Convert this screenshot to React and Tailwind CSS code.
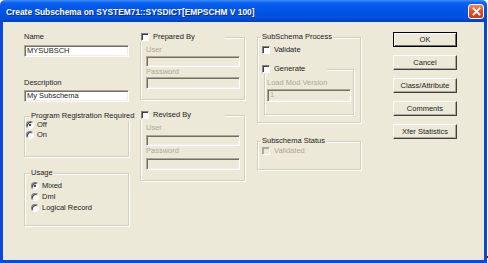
import React from "react"

const sunken = "border border-t-[#aca899] border-l-[#aca899] border-b-white border-r-white shadow-[inset_1px_1px_0_#716f64,inset_-1px_-1px_0_#f1efe2]"
const groupBox = "relative border border-[#d0d0bf] shadow-[inset_1px_1px_0_#fff,1px_1px_0_#fff]"

function Radio({ checked }) {
  return (
    <span className="relative w-[8px] h-[8px] shrink-0 rounded-full bg-white border border-t-[#808080] border-l-[#808080] border-b-white border-r-white shadow-[inset_1px_1px_0_#404040]">
      {checked && <span className="absolute left-[2px] top-[2px] w-[2px] h-[2px] rounded-full bg-black" />}
    </span>
  )
}

function Check({ disabled }) {
  return (
    <span className={disabled
      ? "w-[8px] h-[8px] shrink-0 bg-[#ece9d8] border border-t-[#aca899] border-l-[#aca899] border-b-white border-r-white shadow-[inset_1px_1px_0_#aca899]"
      : "w-[8px] h-[8px] shrink-0 bg-white border border-t-[#808080] border-l-[#808080] border-b-white border-r-white shadow-[inset_1px_1px_0_#404040]"} />
  )
}

function Legend({ children }) {
  return <span className="absolute left-[3px] top-[-6px] px-[1px] bg-[#ece9d8] leading-[10px]">{children}</span>
}

function Btn({ children, def }) {
  return (
    <div className={def
      ? "h-[15px] flex items-center justify-center border border-black shadow-[inset_1px_1px_0_#fff,inset_-1px_-1px_0_#716f64]"
      : "h-[15px] flex items-center justify-center border border-t-white border-l-white border-b-[#404040] border-r-[#404040] shadow-[inset_-1px_-1px_0_#aca899]"}>
      {children}
    </div>
  )
}

export default function App() {
  return (
    <div className="relative w-[488px] h-[263px] bg-white overflow-hidden font-['Liberation_Sans',Arial,sans-serif] text-[7.5px] text-[#222]">
      <div className="w-[487px] h-[263px] flex flex-col">
        {/* barra de título */}
        <div className="h-[22px] shrink-0 flex rounded-t-[5px] bg-[linear-gradient(180deg,#3d8ef8_0%,#0a5ef0_14%,#0056e6_45%,#0050de_80%,#0040c4_100%)]">
          <span className="pl-[6px] pt-[7px] leading-[10px] text-[8.4px] font-bold text-white [text-shadow:1px_1px_0_#0a2a8c] whitespace-nowrap">
            Create Subschema on SYSTEM71::SYSDICT[EMPSCHM V 100]
          </span>
          <div className="ml-auto mr-[3px] mt-[4px] w-[16px] h-[15px] rounded-[3px] border border-white bg-[linear-gradient(180deg,#f08a6c_0%,#e0522c_45%,#c83c18_100%)] flex items-center justify-center">
            <svg width="9" height="9" viewBox="0 0 9 9">
              <path d="M1.5 1.5 L7.5 7.5 M7.5 1.5 L1.5 7.5" stroke="#fff" strokeWidth="1.8" strokeLinecap="square" />
            </svg>
          </div>
        </div>

        <div className="flex-1 flex bg-[#ece9d8] border-x-[3px] border-b-[3px] border-[#0a47dc]">
          {/* columna 1 */}
          <div className="ml-[21px] mt-[10px] w-[105px] flex flex-col">
            <span className="leading-[10px]">Name</span>
            <div className={`mt-[3px] h-[12px] bg-white pl-[2px] leading-[10px] ${sunken}`}>MYSUBSCH</div>
            <span className="mt-[21px] leading-[10px]">Description</span>
            <div className={`mt-[2px] h-[12px] bg-white pl-[2px] leading-[10px] ${sunken}`}>My Subschema</div>

            <div className={`mt-[14px] h-[41px] pt-[3px] pl-[1px] ${groupBox}`}>
              <span className="absolute left-[5px] top-[-6px] px-[1px] bg-[#ece9d8] leading-[10px] whitespace-nowrap">Program Registration Required</span>
              <div className="h-[10px] flex items-center gap-[3px]"><Radio checked />Off</div>
              <div className="h-[10px] flex items-center gap-[3px]"><Radio />On</div>
            </div>

            <div className={`mt-[16px] h-[53px] pt-[6px] pl-[6px] ${groupBox}`}>
              <span className="absolute left-[5px] top-[-6px] px-[1px] bg-[#ece9d8] leading-[10px]">Usage</span>
              <div className="h-[11px] flex items-center gap-[3px]"><Radio checked />Mixed</div>
              <div className="h-[11px] flex items-center gap-[3px]"><Radio />Dml</div>
              <div className="h-[11px] flex items-center gap-[3px]"><Radio />Logical Record</div>
            </div>
          </div>

          {/* columna 2 */}
          <div className="ml-[11px] mt-[15px] w-[105px] flex flex-col">
            <div className={`h-[63px] pt-[7px] pl-[5px] flex flex-col ${groupBox}`}>
              <div className="absolute left-[-1px] top-[-6px] w-[85px] h-[10px] pl-[1px] flex items-center gap-[4px] bg-[#ece9d8]"><Check />Prepared By</div>
              <span className="leading-[10px] text-[#aca899]">User</span>
              <div className={`mt-[1px] w-[94px] h-[11px] bg-[#ece9d8] ${sunken}`} />
              <span className="leading-[10px] text-[#aca899]">Password</span>
              <div className={`w-[94px] h-[12px] bg-[#ece9d8] ${sunken}`} />
            </div>
            <div className={`mt-[15px] h-[66px] pt-[7px] pl-[5px] flex flex-col ${groupBox}`}>
              <div className="absolute left-[-1px] top-[-6px] w-[85px] h-[10px] pl-[1px] flex items-center gap-[4px] bg-[#ece9d8]"><Check />Revised By</div>
              <span className="leading-[10px] text-[#aca899]">User</span>
              <div className={`mt-[2px] w-[94px] h-[11px] bg-[#ece9d8] ${sunken}`} />
              <span className="leading-[10px] text-[#aca899]">Password</span>
              <div className={`mt-[2px] w-[94px] h-[12px] bg-[#ece9d8] ${sunken}`} />
            </div>
          </div>

          {/* columna 3 */}
          <div className="ml-[12px] mt-[15px] w-[104px] flex flex-col">
            <div className={`h-[86px] pt-[7px] flex flex-col ${groupBox}`}>
              <Legend>SubSchema Process</Legend>
              <div className="h-[10px] pl-[4px] flex items-center gap-[4px]"><Check />Validate</div>
              <div className={`mt-[14px] mx-[6px] h-[46px] pt-[8px] pl-[2px] flex flex-col ${groupBox}`}>
                <div className="absolute left-[-3px] top-[-6px] w-[65px] h-[10px] flex items-center gap-[4px] bg-[#ece9d8]"><Check />Generate</div>
                <span className="leading-[10px] text-[#aca899]">Load Mod Version</span>
                <div className={`mt-[1px] w-[84px] h-[13px] pl-[2px] leading-[10px] text-[#aca899] bg-[#ece9d8] ${sunken}`}>1</div>
              </div>
            </div>
            <div className={`mt-[18px] h-[29px] pt-[4px] ${groupBox}`}>
              <Legend>Subschema Status</Legend>
              <div className="h-[10px] pl-[4px] flex items-center gap-[4px] text-[#aca899]"><Check disabled />Validated</div>
            </div>
          </div>

          {/* botones */}
          <div className="ml-[32px] mt-[10px] w-[64px] flex flex-col gap-[8px]">
            <Btn def>OK</Btn>
            <Btn>Cancel</Btn>
            <Btn>Class/Attribute</Btn>
            <Btn>Comments</Btn>
            <Btn>Xfer Statistics</Btn>
          </div>
        </div>
      </div>
      <span className="absolute left-[487px] top-[256px] w-[1px] h-[2px] bg-[#c00000]" />
    </div>
  )
}
